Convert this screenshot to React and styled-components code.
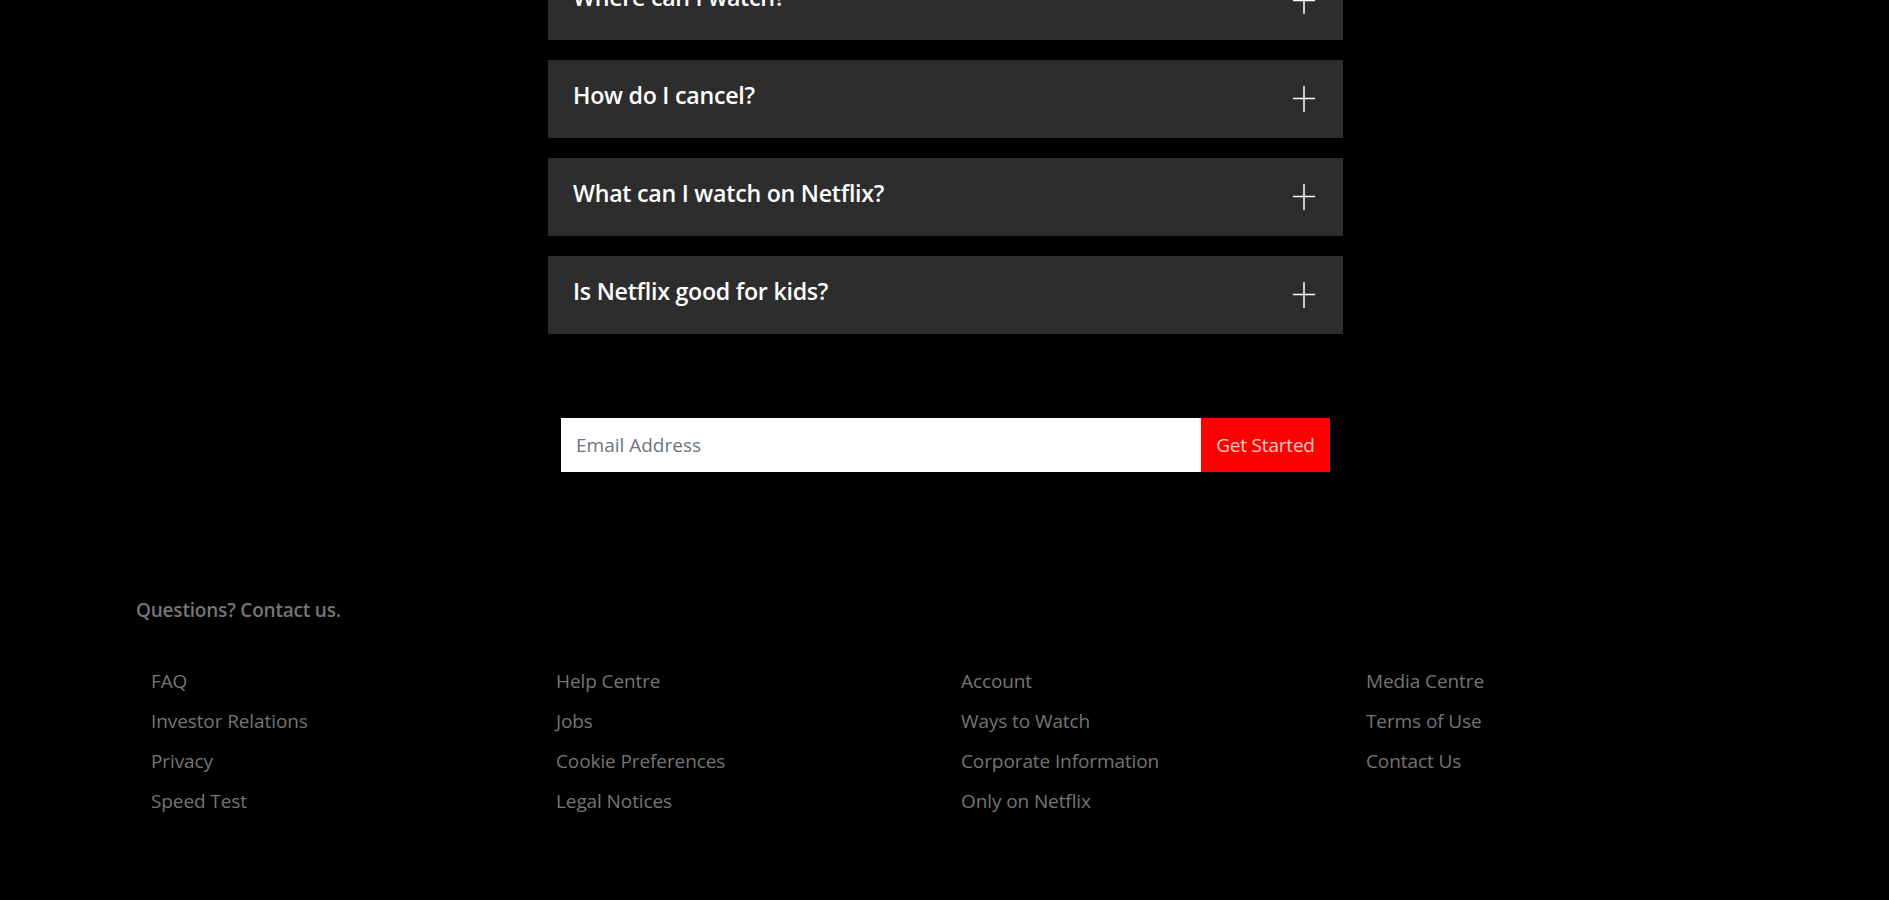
import React from "react";
import styled, { createGlobalStyle } from "styled-components";

const Global = createGlobalStyle`
  html, body { margin: 0; padding: 0; background: #000; }
  body { font-family: "Open Sans", "Noto Sans", sans-serif; overflow: hidden; }
  * { box-sizing: border-box; }
`;

const Page = styled.div`
  background: #000;
  min-height: 900px;
  margin-top: -38px;
  padding-left: 2px;
`;

const FaqList = styled.ul`
  list-style: none;
  margin: 0 auto;
  padding: 0;
  width: 795px;
  display: flex;
  flex-direction: column;
  gap: 20px;
`;

const FaqItem = styled.li`
  height: 78px;
  background: #2d2d2d;
  display: flex;
  align-items: center;
  justify-content: space-between;
  padding: 0 28px 0 25px;
  color: #fff;
  font-size: 23.2px;
  font-weight: 600;
  letter-spacing: -0.25px;
`;

const Question = styled.span`
  margin-top: -8px;
`;

const PlusIcon = () => (
  <svg width="22" height="26" viewBox="0 0 22 26" aria-hidden="true">
    <line x1="11" y1="0" x2="11" y2="26" stroke="#fff" strokeWidth="1.5" />
    <line x1="0" y1="12.5" x2="22" y2="12.5" stroke="#fff" strokeWidth="1.5" />
  </svg>
);

const Form = styled.form`
  display: flex;
  width: 769px;
  height: 54px;
  margin: 84px auto 0;
`;

const EmailInput = styled.input`
  flex: 1;
  border: none;
  outline: none;
  padding: 0 15px;
  font-family: "Open Sans", "Noto Sans", sans-serif;
  font-size: 19px;
  color: #333;
  background: #fff;
  &::placeholder { color: #6c757d; }
`;

const StartButton = styled.button`
  width: 129px;
  border: none;
  background: #ff0000;
  color: #f0caca;
  font-family: "Open Sans", "Noto Sans", sans-serif;
  font-size: 19px;
  letter-spacing: -0.2px;
  padding: 0;
  cursor: pointer;
`;

const Footer = styled.footer`
  padding: 125px 133px 0 134px;
  color: #757575;
`;

const Contact = styled.p`
  margin: 0 0 38px;
  font-size: 19px;
  line-height: 26px;
  font-weight: 600;
  letter-spacing: -0.2px;
`;

const LinkGrid = styled.div`
  display: grid;
  grid-template-columns: repeat(4, 1fr);
`;

const LinkColumn = styled.ul`
  list-style: none;
  margin: 0;
  padding: 0 0 0 15px;
  display: flex;
  flex-direction: column;
`;

const FooterLink = styled.li`
  font-size: 19px;
  line-height: 40px;
  color: #757575;
  letter-spacing: -0.1px;
`;

const questions = [
  "Where can I watch?",
  "How do I cancel?",
  "What can I watch on Netflix?",
  "Is Netflix good for kids?",
];

const columns = [
  ["FAQ", "Investor Relations", "Privacy", "Speed Test"],
  ["Help Centre", "Jobs", "Cookie Preferences", "Legal Notices"],
  ["Account", "Ways to Watch", "Corporate Information", "Only on Netflix"],
  ["Media Centre", "Terms of Use", "Contact Us"],
];

export default function App() {
  return (
    <>
      <Global />
      <Page>
        <FaqList>
          {questions.map((q) => (
            <FaqItem key={q}>
              <Question>{q}</Question>
              <PlusIcon />
            </FaqItem>
          ))}
        </FaqList>
        <Form onSubmit={(e) => e.preventDefault()}>
          <EmailInput type="email" placeholder="Email Address" />
          <StartButton type="submit">Get Started</StartButton>
        </Form>
        <Footer>
          <Contact>Questions? Contact us.</Contact>
          <LinkGrid>
            {columns.map((col, i) => (
              <LinkColumn key={i}>
                {col.map((l) => (
                  <FooterLink key={l}>{l}</FooterLink>
                ))}
              </LinkColumn>
            ))}
          </LinkGrid>
        </Footer>
      </Page>
    </>
  );
}
